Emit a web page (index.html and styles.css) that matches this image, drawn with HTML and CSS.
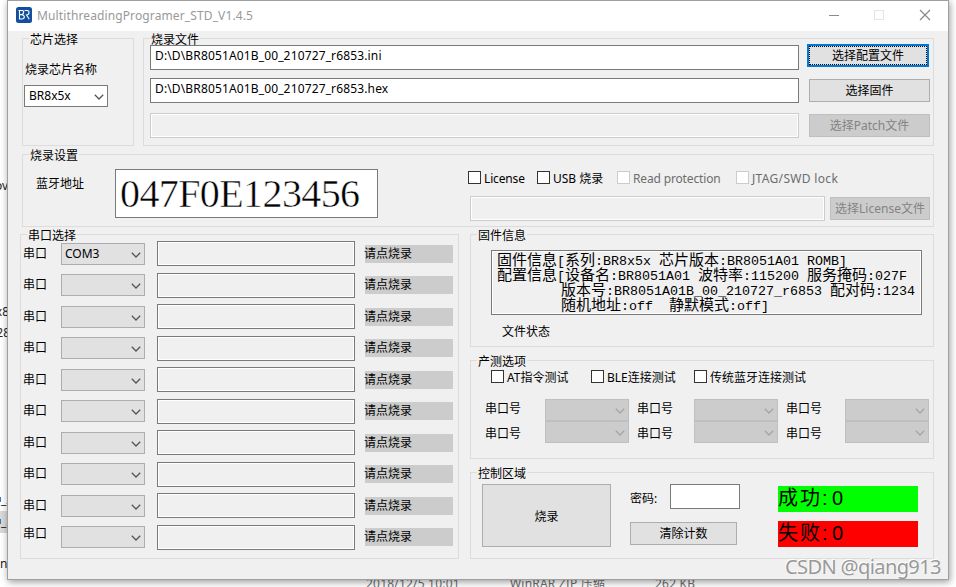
FILE: index.html
```html
<!DOCTYPE html>
<html lang="zh-CN">
<head>
<meta charset="utf-8">
<title>MultithreadingProgramer_STD_V1.4.5</title>
<link rel="stylesheet" href="styles.css">
</head>
<body>
<svg width="0" height="0" class="defs"><symbol id="chev" viewBox="0 0 10 6"><path d="M.8 .8 5 5 9.2 .8" fill="none" stroke="currentColor" stroke-width="1.3"/></symbol></svg>
<div class="desktop">
  <span class="bg t1">ov</span><span class="bg t2">x8</span><span class="bg t3">28</span>
  <span class="bg t4"><b></b>_2</span><span class="bg t5"><b></b>_2</span><span class="bg t6">n</span>
  <span class="bg f1">2018/12/5 10:01</span><span class="bg f2">WinRAR ZIP 压缩</span><span class="bg f3">262 KB</span>

  <div class="window">
    <div class="titlebar">
      <svg class="logo" width="16" height="16" viewBox="0 0 16 16"><rect width="16" height="16" rx="2.5" fill="#134f9e"/><path d="M2.5 3.5H6.2Q8 3.8 7.6 5.6 7.3 7.4 5.4 7.6H3.5M3.5 3.5V12H6.2Q8.6 11.6 8.3 9.7 8 7.8 5.6 7.6M8.6 3.5H11Q13.3 3.8 13 5.8 12.8 7.9 10.5 8L13.3 12.3" fill="none" stroke="#fff" stroke-width="1.1"/></svg>
      <span class="title">MultithreadingProgramer_STD_V1.4.5</span>
      <svg class="ctl" width="102" height="12" viewBox="0 0 102 12"><path d="M0 6.5H10" stroke="#8b8b8b"/><rect x="45.5" y="1.5" width="9" height="9" fill="none" stroke="#e4e4e4"/><path d="M91 1 101 11M101 1 91 11" stroke="#858585" stroke-width="1.1"/></svg>
    </div>

    <div class="client">
      <div class="top">
        <section class="group chip">
          <span class="legend">芯片选择</span>
          <div class="chip-label">烧录芯片名称</div>
          <div class="select white">BR8x5x<svg><use href="#chev"/></svg></div>
        </section>
        <section class="group files">
          <span class="legend">烧录文件</span>
          <div class="files-body">
            <div class="paths">
              <div class="input path">D:\D\BR8051A01B_00_210727_r6853.ini</div>
              <div class="input path">D:\D\BR8051A01B_00_210727_r6853.hex</div>
              <div class="input off"></div>
            </div>
            <div class="file-btns">
              <div class="btn focus">选择配置文件</div>
              <div class="btn">选择固件</div>
              <div class="btn off">选择Patch文件</div>
            </div>
          </div>
        </section>
      </div>

      <section class="group settings">
        <span class="legend">烧录设置</span>
        <div class="settings-body">
          <div class="addr-label">蓝牙地址</div>
          <div class="input addr">047F0E123456</div>
          <div class="opts">
            <div class="checks">
              <label class="check"><i></i><span class="tight">License</span></label>
              <label class="check"><i></i><span>USB 烧录</span></label>
              <label class="check off"><i></i><span class="tight">Read protection</span></label>
              <label class="check off"><i></i><span class="wide">JTAG/SWD lock</span></label>
            </div>
            <div class="license"><div class="input off"></div><div class="btn off">选择License文件</div></div>
          </div>
        </div>
      </section>

      <div class="bottom">
        <section class="group ports">
          <span class="legend">串口选择</span>
          <div class="port-rows">
            <div class="port"><span>串口</span><div class="select">COM3<svg><use href="#chev"/></svg></div><div class="bar"></div><div class="status">请点烧录</div></div>
            <div class="port"><span>串口</span><div class="select"><svg><use href="#chev"/></svg></div><div class="bar"></div><div class="status">请点烧录</div></div>
            <div class="port"><span>串口</span><div class="select"><svg><use href="#chev"/></svg></div><div class="bar"></div><div class="status">请点烧录</div></div>
            <div class="port"><span>串口</span><div class="select"><svg><use href="#chev"/></svg></div><div class="bar"></div><div class="status">请点烧录</div></div>
            <div class="port"><span>串口</span><div class="select"><svg><use href="#chev"/></svg></div><div class="bar"></div><div class="status">请点烧录</div></div>
            <div class="port"><span>串口</span><div class="select"><svg><use href="#chev"/></svg></div><div class="bar"></div><div class="status">请点烧录</div></div>
            <div class="port"><span>串口</span><div class="select"><svg><use href="#chev"/></svg></div><div class="bar"></div><div class="status">请点烧录</div></div>
            <div class="port"><span>串口</span><div class="select"><svg><use href="#chev"/></svg></div><div class="bar"></div><div class="status">请点烧录</div></div>
            <div class="port"><span>串口</span><div class="select"><svg><use href="#chev"/></svg></div><div class="bar"></div><div class="status">请点烧录</div></div>
            <div class="port"><span>串口</span><div class="select"><svg><use href="#chev"/></svg></div><div class="bar"></div><div class="status">请点烧录</div></div>
          </div>
        </section>

        <div class="right">
          <section class="group firmware">
            <span class="legend">固件信息</span>
            <div class="info">
              <div>固件信息<tt>[</tt>系列<tt>:BR8x5x </tt>芯片版本<tt>:BR8051A01 ROMB]</tt></div>
              <div>配置信息<tt>[</tt>设备名<tt>:BR8051A01 </tt>波特率<tt>:115200 </tt>服务掩码<tt>:027F</tt></div>
              <div><tt>        </tt>版本号<tt>:BR8051A01B_00_210727_r6853 </tt>配对码<tt>:1234</tt></div>
              <div><tt>        </tt>随机地址<tt>:off  </tt>静默模式<tt>:off]</tt></div>
            </div>
            <div class="file-state">文件状态</div>
          </section>

          <section class="group tests">
            <span class="legend">产测选项</span>
            <div class="test-checks">
              <label class="check"><i></i><span>AT指令测试</span></label>
              <label class="check"><i></i><span>BLE连接测试</span></label>
              <label class="check"><i></i><span>传统蓝牙连接测试</span></label>
            </div>
            <div class="test-ports">
              <div class="tlabels"><span>串口号</span><span>串口号</span></div>
              <div><div class="select off"><svg><use href="#chev"/></svg></div><div class="select off"><svg><use href="#chev"/></svg></div></div>
              <div class="tlabels"><span>串口号</span><span>串口号</span></div>
              <div><div class="select off"><svg><use href="#chev"/></svg></div><div class="select off"><svg><use href="#chev"/></svg></div></div>
              <div class="tlabels"><span>串口号</span><span>串口号</span></div>
              <div><div class="select off"><svg><use href="#chev"/></svg></div><div class="select off"><svg><use href="#chev"/></svg></div></div>
            </div>
          </section>

          <section class="group control">
            <span class="legend">控制区域</span>
            <div class="control-body">
              <div class="btn burn">烧录</div>
              <div class="pwd">
                <div class="pwd-row"><span>密码:</span><div class="input"></div></div>
                <div class="btn clear">清除计数</div>
              </div>
              <div class="counts"><div class="ok">成功<tt>:0</tt></div><div class="fail">失败<tt>:0</tt></div></div>
            </div>
          </section>
        </div>
      </div>
    </div>
  </div>
  <div class="watermark">CSDN @qiang913</div>
</div>
</body>
</html>
```
FILE: styles.css
```css
* { box-sizing: border-box; }
body { margin: 0; font: 12px/18px "Noto Sans", "Noto Sans CJK SC", sans-serif; color: #000; }
.defs { position: absolute; }
.desktop { position: relative; width: 956px; height: 587px; background: #fff; overflow: hidden; }
.bg { position: absolute; white-space: nowrap; color: #222; }
.t1 { right: 948px; top: 177px; }
.t2 { right: 947px; top: 303px; }
.t3 { right: 946px; top: 324px; }
.t4, .t5 { left: 0; width: 8px; height: 22px; line-height: 22px; overflow: hidden; top: 489px; }
.t5 { top: 511px; background: #d9d9d9; }
.t4 b, .t5 b { float: left; width: 1px; height: 5px; margin-top: 8px; background: #2a7fd0; }
.t6 { left: 0; top: 555px; }
.f1, .f2, .f3 { top: 575px; color: #6d6d6d; letter-spacing: .2px; }
.f1 { left: 366px; }
.f2 { left: 510px; }
.f3 { left: 655px; }

.window { position: absolute; left: 7px; top: 0; width: 942px; height: 580px; border: 1px solid #a0a0a0; background: #f0f0f0; box-shadow: 1px 2px 7px rgba(0,0,0,.4); }
.titlebar { display: flex; align-items: center; height: 30px; padding: 0 17px 2px 8px; background: #fff; }
.title { margin: 2px 0 0 5px; font-size: 12px; letter-spacing: .12px; color: #999; }
.ctl { margin-left: auto; }
.client { padding: 7px 14px 0 12px; }

.group { border: 1px solid #dcdcdc; }
.legend { display: block; width: fit-content; height: 18px; margin: -8px 0 -10px 6px; padding: 0 1px; background: #f0f0f0; }
.input { height: 25px; border: 1px solid #7a7a7a; background: #fff; }
.input.off { border-color: #ccc; background: #f0f0f0; box-shadow: inset 0 0 0 1px #fff; }
.btn { height: 23px; padding-top: 1px; border: 1px solid #adadad; background: #e1e1e1; display: flex; align-items: center; justify-content: center; white-space: nowrap; }
.btn.off { background: #ccc; border-color: #bfbfbf; color: #838383; }
.btn.focus { border: 2px solid #0078d7; outline: 1px dotted #000; outline-offset: -3px; }
.select { width: 84px; height: 22px; border: 1px solid #adadad; background: #e1e1e1; display: flex; align-items: center; padding: 1px 3px 0 3px; color: #000; }
.select svg { width: 10px; height: 6px; margin: 1px 0 0 auto; color: #555; }
.select.white { background: #fff; border-color: #7a7a7a; padding: 0 3px 0 4px; }
.select.off { background: #ccc; border-color: #bfbfbf; }
.select.off svg { color: #a5a5a5; }
.check { display: flex; align-items: center; white-space: nowrap; }
.check i { width: 13px; height: 13px; margin: -1px 3px 0 0; border: 1px solid #333; background: #fff; flex: none; }
.check span { position: relative; top: 1px; }
.check .tight { letter-spacing: -.15px; }
.check .wide { letter-spacing: .33px; }
.check.off { color: #6d6d6d; }
.check.off i { border-color: #ccc; }

.top { display: flex; gap: 9px; height: 108px; margin-left: 2px; }
.chip { width: 112px; }
.chip-label { margin: 22px 0 6px 2px; }
.chip .select { margin-left: 1px; }
.files { width: 791px; }
.files-body { display: flex; gap: 8px; padding: 5px 0 0 6px; }
.paths { width: 649px; padding-top: 1px; }
.path { margin-bottom: 8px; padding: 1px 4px; letter-spacing: .14px; }
.path + .off { margin-top: 10px; }
.file-btns { width: 122px; flex: none; }
.file-btns .btn + .btn { margin: 12px 0 0 2px; width: 121px; }

.settings { height: 73px; margin: 8px 0 7px 2px; }
.settings-body { display: flex; }
.addr-label { width: 79px; margin: 20px 0 0 13px; }
.input.addr { width: 263px; height: 49px; margin-top: 14px; padding-left: 4px; font: 40px/47px "Liberation Serif", serif; letter-spacing: -.6px; -webkit-text-stroke: .5px #fff; }
.opts { margin: 14px 0 0 90px; }
.checks { display: grid; grid-template-columns: 69px 80px 119px auto; }
.license { display: flex; margin: 9px 0 0 2px; }
.license .input { width: 355px; }
.license .btn { width: 100px; margin: 1px 0 0 5px; }

.bottom { display: flex; gap: 11px; }
.ports { width: 439px; height: 325px; }
.port-rows { display: grid; grid-auto-rows: 31.5px; padding: 6px 0 0 3px; }
.port { display: flex; align-items: flex-start; }
.port > span { width: 38px; margin: 3.6px 0 0 -1px; }
.port:last-child > span { margin-top: 0; }
.port .select { margin-top: 1.9px; }
.bar { width: 198px; height: 25px; margin-left: 12px; border: 1px solid #7a7a7a; box-shadow: inset 0 0 0 1px #fff; }
.status { width: 88px; height: 18px; margin: 3.9px 0 0 10px; background: #ccc; line-height: 17px; text-indent: -1px; }

.right { display: flex; flex-direction: column; gap: 13px; width: 464px; }
.firmware { height: 113px; }
.info { width: 431px; height: 65px; margin: 15px 0 0 20px; padding: 0 0 0 5px; border: 1px solid #7a7a7a; box-shadow: inset 0 0 0 1px #fff; font: 15px/15px "Noto Sans CJK SC", sans-serif; }
.info div { height: 15px; white-space: pre; }
.info tt { font: 13.33px/15px "Liberation Mono", monospace; }
.file-state { margin: 8px 0 0 31px; }
.tests { height: 99px; }
.test-checks { display: grid; grid-template-columns: 100px 103px auto; margin: 7px 0 0 20px; }
.test-ports { display: grid; grid-template-columns: 60px 92px 57px 92px 59px 84px; margin: 13px 0 0 14px; }
.tlabels { padding-top: 1px; }
.tlabels span { display: block; height: 25px; }
.control { height: 87px; }
.control-body { display: flex; padding: 11px 0 0 11px; }
.burn { width: 129px; height: 63px; padding-top: 2px; }
.pwd { width: 110px; margin-left: 19px; }
.pwd-row { display: flex; }
.pwd-row span { width: 40px; margin-top: 6px; }
.pwd-row .input { width: 70px; flex: none; }
.clear { width: 107px; margin-top: 13px; }
.counts { width: 140px; margin: 2px 0 0 38px; font: 20px/21px "Noto Sans CJK SC", sans-serif; letter-spacing: 2px; }
.counts div { height: 26px; }
.counts tt { font: 20px/21px "Liberation Sans", sans-serif; letter-spacing: 4.5px; }
.ok { background: #0f0; }
.fail { margin-top: 9px; background: #f00; }
.watermark { position: absolute; left: 785px; top: 554px; font-size: 20px; line-height: 26px; letter-spacing: -.6px; color: #999; text-shadow: -1px -1px 0 #fff; white-space: nowrap; }
```
